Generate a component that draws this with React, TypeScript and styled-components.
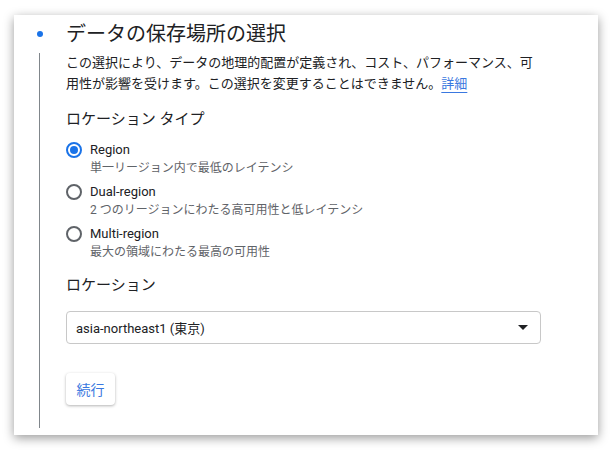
import React from 'react'
import styled, {createGlobalStyle, css} from 'styled-components'

const GlobalStyle = createGlobalStyle`
  html, body {
    margin: 0;
    padding: 0;
    background: #ffffff;
  }
  body {
    font-family: Roboto, "Noto Sans CJK JP", sans-serif;
    color: #202124;
  }
`

const Page = styled.div`
  padding: 15px 15px 15px 14px;
`

const Card = styled.div`
  width: 584px;
  height: 420px;
  box-sizing: border-box;
  background: #fff;
  box-shadow: 0 3px 10px rgba(0, 0, 0, 0.4);
  display: grid;
  grid-template-columns: 52px 475px;
  grid-template-rows: auto 1fr;
  padding-top: 5px;
`

const DotCell = styled.div`
  display: flex;
  align-items: center;
  justify-content: flex-start;
  padding-left: 23px;
`

const Dot = styled.div`
  width: 6px;
  height: 6px;
  border-radius: 50%;
  background: #1a73e8;
`

const Title = styled.h2`
  margin: 0;
  font-size: 20px;
  line-height: 28px;
  font-weight: 400;
  color: #202124;
`

const Rail = styled.div`
  margin: 5px 0 7px 25px;
  width: 1px;
  background: #80868b;
`

const Content = styled.div`
  padding-top: 4px;
  display: flex;
  flex-direction: column;
`

const Description = styled.p`
  margin: 0;
  font-size: 13px;
  line-height: 21px;
  color: #202124;
`

const Link = styled.a`
  color: #3a78e0;
  text-decoration: underline;
  text-decoration-thickness: 1px;
  text-underline-offset: 4px;
`

const Heading = styled.h3<{$top: number}>`
  margin: ${p => p.$top}px 0 0;
  font-size: 15px;
  line-height: 22px;
  font-weight: 400;
  color: #202124;
`

const RadioList = styled.div`
  margin-top: 11px;
  display: flex;
  flex-direction: column;
  gap: 6px;
`

const RadioRow = styled.label`
  display: grid;
  grid-template-columns: 16px 1fr;
  column-gap: 8px;
  align-items: center;
`

const RadioCircle = styled.span<{$checked?: boolean}>`
  width: 16px;
  height: 16px;
  box-sizing: border-box;
  border-radius: 50%;
  border: 2px solid #5f6368;
  display: flex;
  align-items: center;
  justify-content: center;

  ${p =>
    p.$checked &&
    css`
      border-color: #1a73e8;
      &::after {
        content: '';
        width: 8px;
        height: 8px;
        border-radius: 50%;
        background: #1a73e8;
      }
    `}
`

const RadioLabel = styled.span`
  font-size: 13px;
  line-height: 18px;
  color: #202124;
`

const RadioHint = styled.span`
  grid-column: 2;
  font-size: 12px;
  line-height: 18px;
  color: #5f6368;
`

const Select = styled.div`
  margin-top: 15px;
  height: 33px;
  box-sizing: border-box;
  border: 1px solid #c8c8c8;
  border-radius: 4px;
  display: flex;
  align-items: center;
  justify-content: space-between;
  padding: 0 12px 0 9px;
  font-size: 13px;
  color: #202124;
`

const Caret = styled.span`
  width: 0;
  height: 0;
  border-left: 5px solid transparent;
  border-right: 5px solid transparent;
  border-top: 5px solid #202124;
`

const ButtonRow = styled.div`
  margin-top: 29px;
`

const Button = styled.button`
  height: 32px;
  width: 49px;
  border: none;
  border-radius: 4px;
  background: #fff;
  box-shadow: 0 1px 3px rgba(0, 0, 0, 0.3);
  color: #3a78e0;
  font-family: Roboto, "Noto Sans CJK JP", sans-serif;
  font-size: 14px;
  padding: 0;
`

const options = [
  {label: 'Region', hint: '単一リージョン内で最低のレイテンシ', checked: true},
  {label: 'Dual-region', hint: '2 つのリージョンにわたる高可用性と低レイテンシ'},
  {label: 'Multi-region', hint: '最大の領域にわたる最高の可用性'},
]

export default function App() {
  return (
    <Page>
      <GlobalStyle />
      <Card>
        <DotCell>
          <Dot />
        </DotCell>
        <Title>データの保存場所の選択</Title>
        <Rail />
        <Content>
          <Description>
            この選択により、データの地理的配置が定義され、コスト、パフォーマンス、可用性が影響を受けます。この選択を変更することはできません。
            <Link href="#">詳細</Link>
          </Description>
          <Heading $top={14}>ロケーション タイプ</Heading>
          <RadioList>
            {options.map(o => (
              <RadioRow key={o.label}>
                <RadioCircle $checked={o.checked} />
                <RadioLabel>{o.label}</RadioLabel>
                <RadioHint>{o.hint}</RadioHint>
              </RadioRow>
            ))}
          </RadioList>
          <Heading $top={13}>ロケーション</Heading>
          <Select>
            <span>asia-northeast1 (東京)</span>
            <Caret />
          </Select>
          <ButtonRow>
            <Button>続行</Button>
          </ButtonRow>
        </Content>
      </Card>
    </Page>
  )
}
